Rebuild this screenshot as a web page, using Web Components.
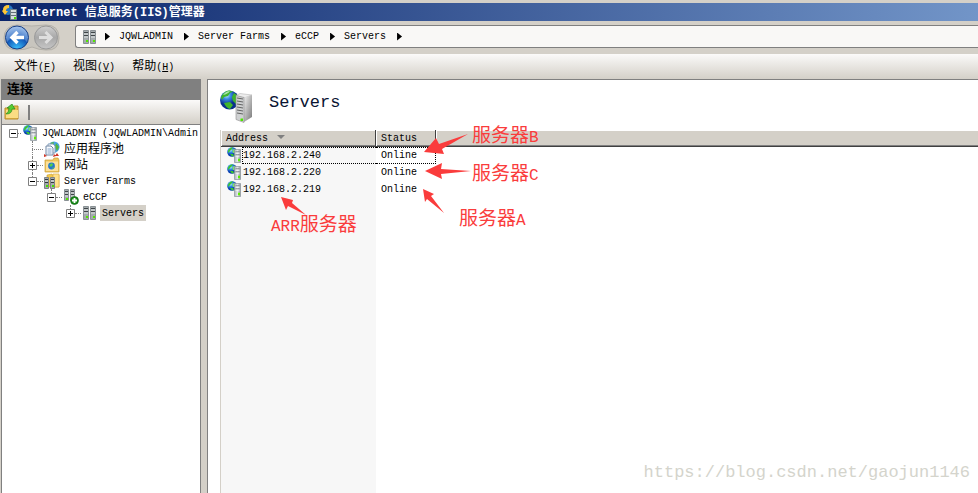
<!DOCTYPE html>
<html lang="zh-CN">
<head>
<meta charset="utf-8">
<title>Internet 信息服务(IIS)管理器</title>
<style>
    html, body { height: 100%; margin: 0; }
    body {
        --face: #d4d0c8;
        --line: #808080;
        --note: #fa3c3c;
        background: var(--face);
        color: #000;
        font: 10px/16px "Liberation Mono", "Noto Sans CJK SC", monospace;
        overflow: hidden;
    }
</style>
</head>
<body>
<iis-manager></iis-manager>
<script>
const ICONS = {
    // globe next to a tower
    server: `<svg viewBox="-2 0 16 16"><defs><radialGradient id="g" cx=".35" cy=".3"><stop offset="0" stop-color="#c8f0ff"/><stop offset=".5" stop-color="#2f8be8"/><stop offset="1" stop-color="#0a3fb0"/></radialGradient><linearGradient id="t"><stop offset="0" stop-color="#aab2b8"/><stop offset=".5" stop-color="#e2e6ea"/><stop offset="1" stop-color="#8c9499"/></linearGradient></defs>
        <circle cx="4" cy="5" r="4.8" fill="url(#g)"/><path d="M1 2q2-2 4-1.8L4 2 2 4 0 6q-.5-2 1-4zM2 7l3 0 1 2-2 .6z" fill="#3cc82c"/><path d="M4.5 3l2-1.5 1 2.5-1 2.5-2-1z" fill="#7fe070"/>
        <path d="M6.5 2.5h6v13h-6z" fill="url(#t)" stroke="#8a949b" stroke-width=".7"/><path d="M7.5 5h4M7.5 8h4" stroke="#5c666d"/><path d="M7.5 6h4M7.5 9h4" stroke="#fff"/><path d="M10 13h2" stroke="#5df000" stroke-width="2.4"/></svg>`,
    big: `<svg viewBox="0 0 34 34"><defs><radialGradient id="g" cx=".35" cy=".25"><stop offset="0" stop-color="#c8edff"/><stop offset=".4" stop-color="#3c8ee6"/><stop offset="1" stop-color="#08308c"/></radialGradient><linearGradient id="t" x2="1" y2="1"><stop offset="0" stop-color="#f2f2f2"/><stop offset="1" stop-color="#777"/></linearGradient></defs>
        <circle cx="9.5" cy="10" r="9.5" fill="url(#g)"/><path d="M1 7q3-6 8-6.5l4 1-3 1.5-2 3-4 1-2 3zM12 7l2-4 3 2 2 5-3 4-3-3zM4 13l6-1 3 3-3 4q-4-1-6-6z" fill="#3fb52c"/><path d="M3 5q3-4 7-4-2 3-7 4z" fill="#d9f5e4" opacity=".7"/>
        <path d="M16 5.5l4-2 12 1.500-8 3z" fill="#ededed" stroke="#aaa" stroke-width=".5"/><path d="M24 8l8-3v22l-8 5z" fill="url(#t)"/><path d="M16 5.500l8 2v25l-8-3z" fill="#cfd1d2" stroke="#8d8d8d" stroke-width=".6"/>
        <path d="M17 8l6 1M17 11l6 1M17 14l6 1M17 17l6 1M17 20l6 1M17 23l6 1" stroke="#555" stroke-width=".9"/><path d="M20.500 28.500h2.500v2.500h-2.500z" fill="#4de600"/></svg>`,
    farm: `<svg viewBox="0 0 16 16"><g id="tower"><path d="M1.500 1.500h5v13h-5z" fill="#a4abad" stroke="#8a9195"/><path d="M2 3.500h4M2 6.500h4" stroke="#3f4548"/><path d="M2 5h4M2 8h4" stroke="#dfe3e4"/><path d="M4 11h2v2H4z" fill="#52e800"/></g><use href="#tower" x="7"/></svg>`,
    add: `<svg viewBox="0 0 16 16"><g id="tower"><path d="M1.500.5h4v11h-4z" fill="#a4abad" stroke="#8a9195"/><path d="M2 2.500h3M2 5.500h3" stroke="#3f4548"/><path d="M2 4h3M2 7h3" stroke="#dfe3e4"/><path d="M3 9h2v2H3z" fill="#52e800"/></g><use href="#tower" x="6"/><circle cx="11.500" cy="11.500" r="4" fill="#188a18" stroke="#0b6010" stroke-width=".6"/><path d="M11.500 9v5M9 11.500h5" stroke="#fff" stroke-width="1.800"/></svg>`,
    folderFarm: `<svg viewBox="0 0 16 16"><path d="M3 2l5-1 1 2 6-1v12H3z" fill="#f2c84e" stroke="#c99c2c" stroke-width=".6"/><path d="M9 1h6v13H9z" fill="#ffe08a" stroke="#d3a636" stroke-width=".6"/><g id="tower"><path d="M.5 4.500h4v11h-4z" fill="#a4abad" stroke="#7d8387"/><path d="M1 6.500h3M1 9.500h3" stroke="#33393d"/><path d="M1 8h3" stroke="#dfe3e4"/><path d="M2 12h2v2H2z" fill="#42e000"/></g><use href="#tower" x="6"/></svg>`,
    sites: `<svg viewBox="0 0 16 16"><path d="M1 3h8l1-2h4l1 2v12H1z" fill="#efc75c" stroke="#cc9e37" stroke-width=".7"/><path d="M2 4.500h12v9.500H2z" fill="#fce09a"/><circle cx="7.500" cy="9" r="3.400" fill="#2475d2"/><path d="M5 8l3-2 1 2-2 2zM8 11l2-1-1 2z" fill="#58cf45"/></svg>`,
    pools: `<svg viewBox="0 0 16 16"><circle cx="10" cy="6" r="5.600" fill="#4ba3e6"/><path d="M6 2l4-1-1 3zM12 2l3 4-2 4-2-4z" fill="#55b83b"/><path d="M4 3h5l2 2v7H4z" fill="#fff" stroke="#879fba"/><path d="M2 5h5l2 2v7H2z" fill="#f7faff" stroke="#7187a4"/><path d="M3.500 8h4M3.500 10h4M3.500 12h4" stroke="#88a8cb"/><path d="M0 13l3 2-3 1zM13 12l2 3h-4zM10 13l2 2-3 1z" fill="#cf3528"/></svg>`,
    up: `<svg viewBox="0 0 16 16"><path d="M1 4h8l1-2h4v13H1z" fill="#e8bd4d" stroke="#b98b29"/><path d="M2 6h12v8H2z" fill="#fbdd83"/><path d="M2 10q3-2 3-6L3 4l5-4 3 5H8q0 5-6 5z" fill="#55cc32" stroke="#28881c" stroke-width=".7"/></svg>`,
    app: `<svg viewBox="0 0 16 16"><circle cx="6" cy="6" r="5" fill="#2777c4"/><path d="M1 6q0-5 6-5v3Q4 4 4 7l2 0-3 4-3-4z" fill="#ffc533"/><path d="M8.500 5.500h6v10h-6z" fill="#d6dddf" stroke="#6e8088"/><path d="M9 8.500h5M9 11.500h5" stroke="#657079"/><path d="M12 13h2v2h-2z" fill="#4be000"/></svg>`,
    nav: `<svg viewBox="0 0 60 28"><defs><radialGradient id="b" cx=".5" cy="1" r="1"><stop offset="0" stop-color="#3cc4ff"/><stop offset=".5" stop-color="#1258b8"/><stop offset=".55" stop-color="#4a80cc"/><stop offset="1" stop-color="#a8c6ee"/></radialGradient><linearGradient id="f" x2="0" y2="1"><stop offset="0" stop-color="#d0d0d0"/><stop offset=".5" stop-color="#a8a8a8"/><stop offset="1" stop-color="#c6c6c6"/></linearGradient></defs>
        <path d="M14 1Q29 3 43 1q13 0 13 13T43 26q-7 0-14-3-7 3-15 3Q1 26 1 14T14 1z" fill="#c8c5be" stroke="#b4b1aa"/>
        <circle cx="14" cy="13.500" r="11.500" fill="url(#b)" stroke="#173f86"/><circle cx="43" cy="13.500" r="11.500" fill="url(#f)" stroke="#999"/>
        <path d="M21 13.500H9m5.500-5.500L9 13.500l5.500 5.500" fill="none" stroke="#fff" stroke-width="3.400"/><path d="M36 13.500h12m-5.500-5.500l5.500 5.500-5.500 5.500" fill="none" stroke="#dedede" stroke-width="3"/></svg>`
};

class IisIcon extends HTMLElement {
    constructor() {
        super();
        this.attachShadow({ mode: 'open' });
    }

    connectedCallback() {
        this.shadowRoot.innerHTML = `
        <style>
            :host { display: block; flex: none; width: 16px; height: 16px; }
            svg { display: block; width: 100%; height: 100%; }
        </style>
        ${ICONS[this.getAttribute('name')]}`;
    }
}
customElements.define('iis-icon', IisIcon);

class IisTitlebar extends HTMLElement {
    constructor() {
        super();
        this.attachShadow({ mode: 'open' }).innerHTML = `
        <style>
            :host {
                display: flex; align-items: center; gap: 2px;
                height: 18px; margin-top: 3px; padding-left: 2px;
                background: linear-gradient(90deg, #0a246a, #7295c8);
                color: #fff;
            }
            h1 { margin: 0; font-size: 12px; line-height: 16px; padding-top: 2px; font-weight: bold; }
        </style>
        <iis-icon name="app"></iis-icon>
        <h1><slot></slot></h1>`;
    }
}
customElements.define('iis-titlebar', IisTitlebar);

class IisAddress extends HTMLElement {
    constructor() {
        super();
        this.attachShadow({ mode: 'open' });
    }

    connectedCallback() {
        const crumbs = this.getAttribute('path').split('/');
        this.shadowRoot.innerHTML = `
        <style>
            :host { display: flex; align-items: center; height: 33px; }
            .nav { position: relative; width: 60px; height: 28px; margin: 0 12px 0 3px; }
            .nav iis-icon { width: 60px; height: 28px; }
            .nav div { position: absolute; inset: 0; display: flex; }
            .nav button { flex: 1; border: 0; padding: 0; background: none; }
            nav {
                flex: 1; display: flex; align-items: center; box-sizing: border-box;
                height: 23px; margin-bottom: 2px; padding-left: 6px;
                background: #f9f8f6; border: 1px solid var(--line); border-right: 0;
                border-radius: 3px 0 0 3px;
            }
            a { color: inherit; text-decoration: none; white-space: pre; }
            i { width: 5px; height: 8px; margin: 0 9px 0 11px; background: #000; clip-path: polygon(0 0, 100% 50%, 0 100%); }
            iis-icon + i { margin-left: 7px; }
        </style>
        <div class="nav">
            <iis-icon name="nav"></iis-icon>
            <div><button aria-label="后退"></button><button aria-label="前进" disabled></button></div>
        </div>
        <nav><iis-icon name="farm"></iis-icon><i></i>${crumbs.map((c) => `<a href="#">${c}</a><i></i>`).join('')}</nav>`;
    }
}
customElements.define('iis-address', IisAddress);

class IisMenubar extends HTMLElement {
    constructor() {
        super();
        this.attachShadow({ mode: 'open' }).innerHTML = `
        <style>
            :host {
                display: flex; align-items: center; gap: 17px;
                height: 25px; padding-left: 14px;
                background: linear-gradient(#fbfaf9, var(--face));
            }
            button { border: 0; padding: 2px 0 0; background: none; color: inherit; font: inherit; }
            span { font-size: 12px; }
        </style>
        <button><span>文件</span>(<u>F</u>)</button>
        <button><span>视图</span>(<u>V</u>)</button>
        <button><span>帮助</span>(<u>H</u>)</button>`;
    }
}
customElements.define('iis-menubar', IisMenubar);

class IisNode extends HTMLElement {
    constructor() {
        super();
        this.attachShadow({ mode: 'open' });
    }

    connectedCallback() {
        const state = this.getAttribute('state');
        const box = state ? `<button aria-label="${state === 'open' ? '折叠' : '展开'}"><svg viewBox="0 0 9 9"><path d="M.5.5h8v8h-8z" fill="#fff" stroke="#808080"/><path d="M2 4.5h5${state === 'open' ? '' : 'M4.5 2v5'}" stroke="#000"/></svg></button>` : '';
        this.shadowRoot.innerHTML = `
        <style>
            :host { display: block; }
            .row { position: relative; display: flex; align-items: center; height: 16px; white-space: nowrap; }
            .row::before { content: ''; position: absolute; left: 4px; top: 0; height: 8px; border-left: 1px dotted var(--line); }
            :host(:not(:last-child)) .row::before { height: 16px; }
            :host([root]) .row::before { display: none; }
            .box { display: flex; align-items: center; box-sizing: border-box; width: 15px; height: 16px; margin-right: 1px; }
            :host(:not([state])) .box { padding-left: 4px; }
            .box::after { content: ''; flex: 1; border-top: 1px dotted var(--line); }
            button { position: relative; width: 9px; height: 9px; padding: 0; border: 0; background: none; }
            svg { display: block; width: 9px; height: 9px; }
            .text { height: 15px; margin-left: 2px; padding: 1px 2px 0; }
            :host([zh]) .text { font-size: 12px; }
            :host([selected]) .text { background: var(--face); }
            .kids { padding-left: 19px; }
        </style>
        <div class="row"><div class="box">${box}</div><iis-icon name="${this.getAttribute('icon')}"></iis-icon><span class="text">${this.getAttribute('label')}</span></div>
        <div class="kids"><slot></slot></div>`;
    }
}
customElements.define('iis-node', IisNode);

class IisConnections extends HTMLElement {
    constructor() {
        super();
        this.attachShadow({ mode: 'open' }).innerHTML = `
        <style>
            :host { display: flex; flex-direction: column; overflow: hidden; border: solid var(--line); border-width: 0 1px; background: #fff; }
            h2 { margin: 0; padding: 1px 0 0 5px; background: var(--line); font-size: 13px; line-height: 20px; }
            .tools {
                display: flex; align-items: center; gap: 8px;
                height: 24px; padding-left: 2px;
                background: linear-gradient(#fbfaf9, var(--face)); border-bottom: 1px solid var(--line);
            }
            .tools button { padding: 0; border: 0; background: none; }
            .tools i { width: 2px; height: 15px; background: var(--line); }
            .tree { padding-left: 7px; }
        </style>
        <h2>连接</h2>
        <div class="tools"><button aria-label="向上"><iis-icon name="up"></iis-icon></button><i></i></div>
        <div class="tree"><slot></slot></div>`;
    }
}
customElements.define('iis-connections', IisConnections);

class IisServers extends HTMLElement {
    constructor() {
        super();
        this.attachShadow({ mode: 'open' });
    }

    connectedCallback() {
        const rows = this.getAttribute('rows').split(' ');
        this.shadowRoot.innerHTML = `
        <style>
            :host { display: flex; flex-direction: column; position: relative; padding: 10px 0 0 12px; border: solid var(--line); border-width: 1px 0 0 1px; background: #fff; }
            header { display: flex; gap: 15px; height: 40px; }
            header iis-icon { width: 34px; height: 34px; }
            h2 { margin: 0; padding-top: 1px; color: #0a1432; font-size: 17px; line-height: 24px; font-weight: normal; }
            .list { flex: 1; border-left: 1px solid var(--face); background: linear-gradient(#f7f7f7, #f7f7f7) 0 0 / 155px 100% no-repeat; }
            table { width: 100%; border-collapse: separate; border-spacing: 0; table-layout: fixed; }
            th {
                box-sizing: border-box; height: 17px; padding: 2px 5px 0;
                background: linear-gradient(var(--line), var(--line)) 0 100% / 100% 1px no-repeat, var(--face);
                border: solid #404040; border-width: 0 1px 1px 0;
                box-shadow: inset 1px 1px #fff; font-weight: normal; text-align: left; line-height: 14px;
            }
            th:last-child { border-right: 0; }
            th i { display: inline-block; width: 8px; height: 4px; margin: 0 0 2px 9px; background: var(--line); clip-path: polygon(0 0, 100% 0, 50% 100%); }
            td { height: 17px; padding: 0 5px; box-sizing: border-box; line-height: 15px; }
            td div { display: flex; }
            td span { flex: 1; border: 1px solid transparent; border-right: 0; }
            td:first-child { padding-right: 0; }
            tr.focus span { border: 1px dotted #000; border-right: 0; }
            tr.focus td:nth-child(2) { border: 1px dotted #000; border-left: 0; }
        </style>
        <header><iis-icon name="big"></iis-icon><h2>Servers</h2></header>
        <div class="list">
            <table>
                <colgroup><col style="width:155px"><col style="width:60px"><col></colgroup>
                <thead><tr><th>Address<i></i></th><th>Status</th><th></th></tr></thead>
                <tbody>${rows.map((r, n) => `<tr class="${n ? '' : 'focus'}"><td><div><iis-icon name="server"></iis-icon><span>${r}</span></div></td><td>Online</td><td></td></tr>`).join('')}</tbody>
            </table>
        </div>
        <slot></slot>`;
    }
}
customElements.define('iis-servers', IisServers);

// hand-drawn notes that float over the list
class IisNotes extends HTMLElement {
    constructor() {
        super();
        this.attachShadow({ mode: 'open' }).innerHTML = `
        <style>
            :host { position: absolute; inset: 0; pointer-events: none; color: var(--note); font-size: 16px; line-height: 24px; }
            svg { position: absolute; left: 0; top: 0; width: 340px; height: 160px; }
            p { position: absolute; margin: 0; white-space: nowrap; }
            span { font-size: 19px; }
            .b { left: 264px; top: 45px; }
            .c { left: 264px; top: 83px; }
            .a { left: 251px; top: 128px; }
            .arr { left: 63px; top: 134px; }
            .mark { right: 8px; bottom: 8px; color: #d4d4cc; font-size: 17px; }
        </style>
        <svg viewBox="0 0 340 160" fill="#fa3c3c">
            <path d="M216 72L228 58 231 64 260 54 234 69 236 74z"/>
            <path d="M217 91L234 83 233 89 263 91 233 94 234 99z"/>
            <path d="M215 109L226 114 223 116 236 133 219 119 217 122z"/>
            <path d="M73 117L85 120 84 123 98 135 80 126 78 130z"/>
        </svg>
        <p class="b"><span>服务器</span>B</p>
        <p class="c"><span>服务器</span>C</p>
        <p class="a"><span>服务器</span>A</p>
        <p class="arr">ARR<span>服务器</span></p>
        <p class="mark">https://blog.csdn.net/gaojun1146</p>`;
    }
}
customElements.define('iis-notes', IisNotes);

class IisManager extends HTMLElement {
    constructor() {
        super();
        this.attachShadow({ mode: 'open' }).innerHTML = `
        <style>
            :host { display: flex; flex-direction: column; height: 100vh; overflow: hidden; }
            iis-titlebar, iis-address, iis-menubar { flex: none; }
            main { flex: 1; display: grid; grid-template-columns: 200px 1fr; gap: 6px; min-height: 0; padding-left: 1px; }
        </style>
        <iis-titlebar>Internet 信息服务(IIS)管理器</iis-titlebar>
        <iis-address path="JQWLADMIN/Server Farms/eCCP/Servers"></iis-address>
        <iis-menubar></iis-menubar>
        <main>
            <iis-connections>
                <iis-node root icon="server" label="JQWLADMIN (JQWLADMIN\\Admin" state="open">
                    <iis-node icon="pools" label="应用程序池" zh></iis-node>
                    <iis-node icon="sites" label="网站" state="closed" zh></iis-node>
                    <iis-node icon="folderFarm" label="Server Farms" state="open">
                        <iis-node icon="add" label="eCCP" state="open">
                            <iis-node icon="farm" label="Servers" state="closed" selected></iis-node>
                        </iis-node>
                    </iis-node>
                </iis-node>
            </iis-connections>
            <iis-servers rows="192.168.2.240 192.168.2.220 192.168.2.219"><iis-notes></iis-notes></iis-servers>
        </main>`;
    }
}
customElements.define('iis-manager', IisManager);
</script>
</body>
</html>
